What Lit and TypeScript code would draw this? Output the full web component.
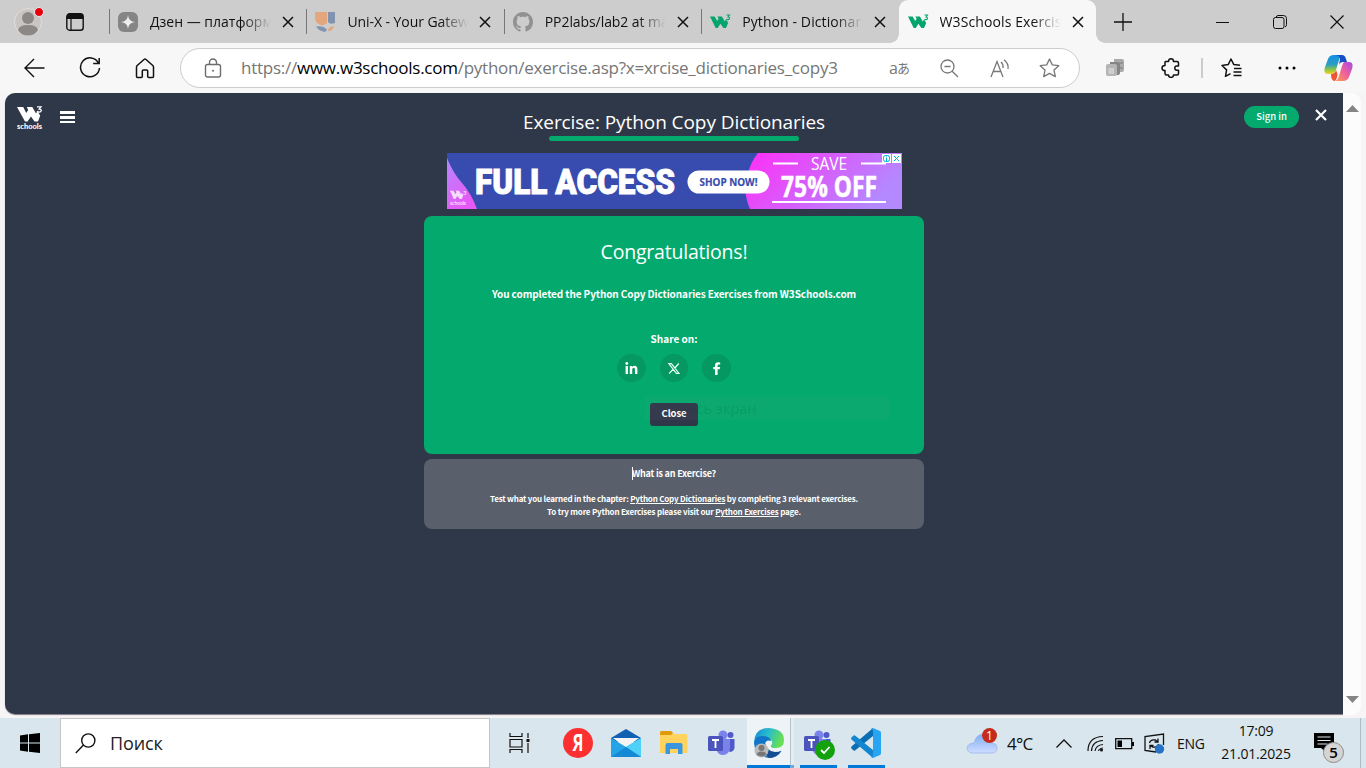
import { LitElement, html, css, svg } from "lit";
import { customElement } from "lit/decorators.js";

const w3Path = svg`<path d="M0 2h9l5 9 3-5-2-4h9l5 9 2-4 4 7-4 10h-5l-7-8-5 8h-4z"/>`;

const w3Favicon = html`<svg width="22" height="15" viewBox="0 0 22 15">
  <path d="M0 2.500h4.600L7.200 7l1.400-2.300-1.200-2.200h4.500l2.900 5 1.200-2.200 2.200 3.700-2.200 5h-2.600l-3-4.200L7.800 14H5.700z" fill="#04a56c"/>
  <path d="M16.500 1h3L18 2.900q1.700.1 1.600 1.500-.3 1.500-2 1.200-.8-.1-1.100-.6" fill="none" stroke="#04a56c" stroke-width="1.100"/>
</svg>`;

const closeIcon = html`<svg width="12" height="12" viewBox="0 0 12 12"><path d="M1 1l10 10M11 1L1 11" stroke="#111" stroke-width="1.500"/></svg>`;

const zenIcon = html`<svg width="20" height="20" viewBox="0 0 20 20"><rect width="20" height="20" rx="6" fill="#858585"/><path d="M10 3q.5 6.500 7 7-6.500.5-7 7-.5-6.500-7-7 6.500-.5 7-7z" fill="#eee"/></svg>`;

const uniIcon = html`<svg width="20" height="20" viewBox="0 0 20 20"><path d="M0 0h12v11L8 13.500Q0 12 0 6z" fill="#e3a67d"/><path d="M13 0h7v11q-5 2-7-1z" fill="#8293af"/><path d="M1 14.500q8-1 11 3.500l-2 2Q4 19 1 14.500z" fill="#8293af"/><path d="M13 18q1-3.500 6-4-1 4-5 5.500z" fill="#e3a67d"/></svg>`;

const githubIcon = html`<svg width="20" height="20" viewBox="0 0 16 16"><path fill="#919191" d="M8 0C3.580 0 0 3.580 0 8c0 3.540 2.290 6.530 5.470 7.590.4.070.55-.17.55-.38 0-.19-.01-.82-.01-1.490-2.010.37-2.530-.49-2.690-.94-.09-.23-.48-.94-.82-1.130-.28-.15-.68-.52-.01-.53.63-.01 1.080.58 1.230.82.72 1.210 1.870.87 2.330.66.070-.52.28-.87.51-1.070-1.780-.2-3.640-.89-3.640-3.950 0-.87.31-1.590.82-2.150-.08-.2-.36-1.020.08-2.120 0 0 .67-.21 2.200.82.64-.18 1.320-.27 2-.27s1.360.09 2 .27c1.530-1.040 2.200-.82 2.200-.82.44 1.100.16 1.920.08 2.120.51.56.82 1.270.82 2.150 0 3.070-1.870 3.750-3.650 3.950.29.25.54.73.54 1.480 0 1.070-.01 1.930-.01 2.200 0 .21.15.46.55.38A8.010 8.010 0 0 0 16 8c0-4.420-3.580-8-8-8z"/></svg>`;

@customElement("browser-tabs")
class BrowserTabs extends LitElement {
  static styles = css`
    :host { display: flex; height: 43px; background: #cdcdcd; font: 14px "Open Sans", sans-serif; color: #111; }
    .profile { width: 109px; display: flex; align-items: center; padding-left: 14px; box-sizing: border-box; }
    .profile svg + svg { margin-left: 22px; }
    .tab { width: 197.400px; height: 43px; box-sizing: border-box; display: flex; align-items: center; padding-left: 9px; position: relative; }
    .tab::before { content: ""; position: absolute; left: 0; top: 9px; height: 25px; width: 1px; background: #777; }
    .tab.active::before { display: none; }
    .icon { width: 22px; height: 20px; display: flex; align-items: center; }
    .label { margin-left: 10px; width: 122px; height: 22px; line-height: 21px; overflow: hidden; white-space: nowrap;
      -webkit-mask-image: linear-gradient(90deg, #000 76%, transparent 99%); mask-image: linear-gradient(90deg, #000 76%, transparent 99%); }
    .close { margin-left: 10px; height: 12px; display: flex; }
    .active { background: #f7f7f7; border-radius: 9px 9px 0 0; }
    .active::after { content: ""; position: absolute; right: -9px; bottom: 0; width: 9px; height: 9px; background: radial-gradient(circle at 100% 0, transparent 8.500px, #f7f7f7 9px); }
    .active .icon::before { content: ""; position: absolute; left: -9px; bottom: 0; width: 9px; height: 9px; background: radial-gradient(circle at 0 0, transparent 8.500px, #f7f7f7 9px); }
    .plus { margin-left: 18px; align-self: center; height: 18px; }
    .controls { margin-left: auto; display: flex; align-items: center; gap: 43px; padding-right: 22px; }
    .controls svg { display: block; }
    .l0 { letter-spacing: 0; } .l1 { letter-spacing: -.06px; } .l2 { letter-spacing: -.08px; } .l3 { letter-spacing: .1px; }
  `;
  render() {
    const tabs = [
      [zenIcon, "Дзен — платформа", "l0"],
      [uniIcon, "Uni-X - Your Gateway", "l1"],
      [githubIcon, "PP2labs/lab2 at main", "l2"],
      [w3Favicon, "Python - Dictionaries", "l3"],
      [w3Favicon, "W3Schools Exercises", "l3"],
    ];
    return html`
      <div class="profile">
        <svg width="30" height="30" viewBox="0 0 30 30"><circle cx="14" cy="15" r="13.500" fill="#c8c5c2" stroke="#e2dfdc"/><circle cx="14" cy="11" r="6" fill="#8b8885"/><path d="M4 23q1-5 10-5t10 5q-3 5.500-10 5.500T4 23z" fill="#8b8885"/><circle cx="25" cy="5" r="4.500" fill="#e6000b" stroke="#eee" stroke-width="1"/></svg>
        <svg width="18" height="18" viewBox="0 0 18 18"><rect x=".8" y=".8" width="16.400" height="16.400" rx="2.800" fill="none" stroke="#111" stroke-width="1.400"/><path d="M.8 6V3.500Q1 1 3.500.8h11q2.500.2 2.700 2.700V6z" fill="#111"/><path d="M5 5v12" stroke="#111" stroke-width="1.200"/></svg>
      </div>
      ${tabs.map(([icon, label, cls], i) => html`<div class="tab ${i === 4 ? "active" : ""}"><span class="icon">${icon}</span><span class="label ${cls}">${label}</span><span class="close">${closeIcon}</span></div>`)}
      <svg class="plus" width="18" height="18"><path d="M9 0v18M0 9h18" stroke="#111" stroke-width="1.300"/></svg>
      <div class="controls">
        <svg width="14" height="14"><path d="M0 7.500h13" stroke="#111"/></svg>
        <svg width="14" height="14" viewBox="0 0 14 14" fill="none" stroke="#111"><rect x=".5" y="2.500" width="10.500" height="11" rx="2"/><path d="M3 2.500Q3.500.5 5 .5h5.500q3 0 3 3v6q0 2-1.500 2.500"/></svg>
        <svg width="14" height="14"><path d="M.5.500l13 13M13.500.500l-13 13" stroke="#111" stroke-width="1.200"/></svg>
      </div>`;
  }
}

@customElement("browser-toolbar")
class BrowserToolbar extends LitElement {
  static styles = css`
    :host { display: flex; height: 50px; background: #f7f7f7; align-items: center; font-family: "Open Sans", sans-serif; }
    svg { display: block; flex: none; }
    .nav { width: 180px; box-sizing: border-box; display: flex; align-items: center; padding-left: 24px; gap: 34px; }
    .address { width: 900px; height: 40px; box-sizing: border-box; border: 1px solid #ccc; border-radius: 20px; background: #fff; display: flex; align-items: center; padding-left: 23px; }
    .url { margin-left: 19px; width: 648px; font-size: 17px; line-height: 24px; color: #767676; letter-spacing: -.25px; white-space: nowrap; }
    .url b { font-weight: 400; color: #000; }
    .translate { width: 24px; color: #777; font: 16px/20px "Open Sans", "Noto Sans CJK JP", sans-serif; letter-spacing: -1px; white-space: nowrap; display: flex; align-items: center; }
    .translate small { font-size: 13px; }
    .address .zoom { margin-left: 27px; } .address .read { margin-left: 31px; } .address .star { margin-left: 29px; }
    .ext { margin-left: 26px; } .puzzle { margin-left: 37px; }
    .divider { width: 1.500px; height: 20px; background: #ccc; margin-left: 20px; }
    .fav { margin-left: 18px; } .more { margin-left: 36px; } .copilot { margin-left: 28px; }
  `;
  render() {
    return html`
      <div class="nav">
        <svg width="21" height="20" viewBox="0 0 21 20" fill="none" stroke="#111" stroke-width="1.400"><path d="M20.500 10H1.500M10 1L1 10l9 9"/></svg>
        <svg width="22" height="22" viewBox="0 0 22 22" fill="none" stroke="#111" stroke-width="1.500"><path d="M19.500 6A9.500 9.500 0 1 0 20.500 11M20.200 1v5.500h-6"/></svg>
        <svg width="20" height="21" viewBox="0 0 20 21" fill="none" stroke="#111" stroke-width="1.500" stroke-linejoin="round"><path d="M1.500 9Q1.500 8.200 2.200 7.500L9 1.500q1-.8 2 0l6.800 6q.7.700.7 1.500v9.500q0 1-1 1h-3.800q-1 0-1-1V13q0-1-1-1H8.300q-1 0-1 1v5.500q0 1-1 1H2.500q-1 0-1-1z"/></svg>
      </div>
      <div class="address">
        <svg width="18" height="20" viewBox="0 0 18 20" fill="none" stroke="#6d6d6d" stroke-width="1.400"><rect x="1.500" y="6.500" width="15" height="12.500" rx="2"/><path d="M5.500 6.500V4.500a3.500 3.500 0 0 1 7 0v2"/><circle cx="9" cy="12.700" r="1" fill="#6d6d6d" stroke="none"/></svg>
        <span class="url">https://<b>www.w3schools.com</b>/python/exercise.asp?x=xrcise_dictionaries_copy3</span>
        <span class="translate">a<small>あ</small></span>
        <svg class="zoom" width="19" height="19" viewBox="0 0 19 19" fill="none" stroke="#777" stroke-width="1.300"><circle cx="7.500" cy="7.500" r="6.500"/><path d="M12.200 12.200L18 18M4.500 7.500h6"/></svg>
        <svg class="read" width="20" height="19" viewBox="0 0 20 19" fill="none" stroke="#777" stroke-width="1.300"><path d="M1 18L7 2.500 13 18M3 12.500h8M11 3q2.500 2.200 2 6M14 .7q5 4 4 9.300"/></svg>
        <svg class="star" width="21" height="20" viewBox="0 0 21 20" fill="none" stroke="#777" stroke-width="1.300" stroke-linejoin="round"><path d="M10.500 1l2.800 5.900 6.500.8-4.800 4.400 1.300 6.500-5.800-3.200-5.800 3.200L6 12.100 1.200 7.700l6.500-.8z"/></svg>
      </div>
      <svg class="ext" width="18" height="20" viewBox="0 0 18 20"><path d="M8 1h8q2 0 2 2v9q0 2-2 2H8z" fill="#aaa"/><path d="M4 4h8q2 0 2 2v9q0 2-2 2H4z" fill="#858585"/><path d="M14.500 4h2v2h-2zM14.500 9h2v2h-2z" fill="#888"/><rect y="6" width="11" height="12" rx="2" fill="#b5b5b5"/><rect x="2.500" y="10" width="5.500" height="6" fill="#cecece"/></svg>
      <svg class="puzzle" width="20" height="20" viewBox="0 0 20 20" fill="none" stroke="#111" stroke-width="1.500" stroke-linejoin="round"><path d="M4.500 3.500h3q0-2.700 2.500-2.700t2.500 2.700H16q1.500 0 1.500 1.500v3h-1.700q-2 0-2 2.100t2 2.100h1.700V15.500q0 1.500-1.500 1.500h-3.500q0 2.400-2.500 2.400T7.500 17H5.500q-1.500 0-1.500-1.500V12.600Q1 12.600 1 10t3-2.600V4z"/></svg>
      <span class="divider"></span>
      <svg class="fav" width="21" height="20" viewBox="0 0 21 20" fill="none" stroke="#111" stroke-width="1.500" stroke-linejoin="round"><path d="M19 7.300l-6.200-.7L10 1 7.200 6.600 1 7.500l4.600 4.400L4.500 18.300l5-2.700M13 10.500h7.500M12.500 14h8M12.500 17.500h8"/></svg>
      <svg class="more" width="18" height="4"><circle cx="2" cy="2" r="1.500"/><circle cx="9" cy="2" r="1.500"/><circle cx="16" cy="2" r="1.500"/></svg>
      <svg class="copilot" width="29" height="28" viewBox="0 0 29 28"><defs>
        <linearGradient id="a" x1="0" y1="0" x2="0" y2="1"><stop stop-color="#168fe5"/><stop offset=".5" stop-color="#2b9fc4"/><stop offset=".8" stop-color="#9cc73a"/><stop offset="1" stop-color="#f4d52a"/></linearGradient>
        <linearGradient id="b" x1="1" y1="0" x2="0" y2="1"><stop stop-color="#a34be8"/><stop offset=".5" stop-color="#f0609a"/><stop offset="1" stop-color="#fb9f50"/></linearGradient></defs>
        <path d="M10 1h9q-3 1-4 5l-3 10q-1.500 4-5 4H4q-5 0-3-7L4 5q1.500-4 6-4z" fill="url(#a)"/>
        <path d="M12 1h6q3 0 4 4l1 3h-4q-3 0-4 3l1-6q0-3-4-4z" fill="#1650c4"/>
        <path d="M20 8h5q5 0 3 7l-3 8q-1.500 4-6 4h-8q3-1 4-5l3-10q1-3 2-4z" fill="url(#b)"/>
        <path d="M7 20q4 0 5-4l1.500 4q-.5 6-3 7Q7 27 7 20z" fill="#ee5537"/></svg>`;
  }
}

@customElement("ad-banner")
class AdBanner extends LitElement {
  static styles = css`
    :host { display: block; width: 455px; height: 56px; }
    svg { display: block; }
    .strong { font-family: "Roboto", sans-serif; font-weight: 900; }
    .open { font-family: "Open Sans", sans-serif; }
    .bold { font-weight: 700; }
    .geo { font-family: "Lato", sans-serif; font-weight: 700; }
  `;
  render() {
    return html`<svg width="455" height="56" viewBox="0 0 455 56">
      <defs>
        <linearGradient id="p" x1="0" y1="0" x2="1" y2=".35"><stop stop-color="#ff2df7"/><stop offset="1" stop-color="#b488ff"/></linearGradient>
        <linearGradient id="q" x1="0" y1="0" x2=".5" y2="1"><stop stop-color="#b488ff"/><stop offset="1" stop-color="#e758f4"/></linearGradient>
      </defs>
      <rect width="455" height="56" fill="#384caf"/>
      <path d="M0 5q6 15 15 25t15 26H0z" fill="url(#q)"/>
      <path d="M311 0q-8 10-10 21-6 17 2 35h152V0z" fill="url(#p)"/>
      <g transform="translate(3 37) scale(.38)" fill="#f6dcff">${w3Path}</g>
      <text x="16" y="42" font-size="6" class="geo" fill="#f6dcff">3</text>
      <text x="3" y="52" font-size="5" class="geo" fill="#f6dcff" textLength="16">schools</text>
      <text x="28" y="40.500" font-size="34.500" class="strong" fill="#fff" stroke="#fff" stroke-width=".9" textLength="200" lengthAdjust="spacingAndGlyphs">FULL ACCESS</text>
      <rect x="240.500" y="17.500" width="82" height="23" rx="11.500" fill="#fff"/>
      <text x="252.500" y="33" font-size="10.500" class="open bold" fill="#384caf" stroke="#384caf" stroke-width=".2" textLength="58" lengthAdjust="spacingAndGlyphs">SHOP NOW!</text>
      <path d="M326 10.500h25M414 10.500h25M325 49h114" stroke="#fff" stroke-width="2"/>
      <text x="364" y="17" font-size="18" class="open" fill="#fff" textLength="36" lengthAdjust="spacingAndGlyphs">SAVE</text>
      <text x="334" y="43.500" font-size="28" class="open bold" fill="#fff" stroke="#fff" stroke-width=".5" textLength="96" lengthAdjust="spacingAndGlyphs">75% OFF</text>
      <rect x="435" y="1" width="9" height="9" fill="#fff"/><rect x="445" y="1" width="9" height="9" fill="#fff"/>
      <g fill="none" stroke="#00aecd"><rect x="436.500" y="2.500" width="6" height="6" rx="2"/><path d="M439.500 3.500v1M439.500 5v3M447 3l5 5M452 3l-5 5"/></g>
    </svg>`;
  }
}

@customElement("exercise-page")
class ExercisePage extends LitElement {
  static styles = css`
    :host { display: flex; height: 622px; padding-left: 5px; background: #f7f4f6; }
    svg { display: block; }
    .page { width: 1338px; height: 621px; box-sizing: border-box; background: #2f3848; border-radius: 10px 0 0 10px; color: #fff; display: grid; grid-template-columns: 300px 1fr 300px; box-shadow: 0 1px 1px #7d7682; }
    .brand { display: flex; gap: 15px; padding: 11px 0 0 12px; align-items: flex-start; }
    .menu { margin-top: 7px; display: grid; gap: 2px; width: 15px; }
    .menu i { height: 2.800px; background: #fff; }
    .logo text { font: 900 8px "Lato", sans-serif; }
    .center { display: flex; flex-direction: column; align-items: center; }
    h1 { margin: 15px 0 0; font: 400 19px/28px "Open Sans", sans-serif; letter-spacing: -.07px; white-space: nowrap; }
    .bar { width: 250px; height: 5px; border-radius: 3px; background: #04aa6d; }
    ad-banner { margin-top: 12px; }
    .card { margin-top: 7px; width: 500px; height: 238px; border-radius: 8px; background: #04aa6d; display: flex; flex-direction: column; align-items: center; position: relative; }
    h2 { margin: 22px 0 0; font: 400 19.500px/28px "Open Sans", sans-serif; letter-spacing: -.2px; }
    .src { font-family: "Noto Sans CJK SC", sans-serif; font-weight: 700; white-space: nowrap; }
    .done { margin: 20px 0 0; font-size: 10px; line-height: 16px; letter-spacing: -.1px; }
    .share { margin: 29px 0 0; font-size: 10px; line-height: 16px; }
    .socials { display: flex; gap: 14px; margin-top: 7px; }
    .socials span { width: 28.500px; height: 28px; border-radius: 50%; background: #059862; display: grid; place-items: center; }
    .close { margin-top: 21px; width: 48px; height: 23px; border: 0; border-radius: 3px; background: #2f3848; color: #fff; font-size: 9.500px; letter-spacing: -.1px; line-height: 20px; text-align: center; }
    .toast { position: absolute; left: 221px; top: 180px; width: 244px; height: 24px; box-sizing: border-box; padding-left: 34px; background: rgba(200, 150, 180, .04); color: rgba(0, 60, 40, .14); font: 14.500px/26px "Open Sans", sans-serif; border-radius: 2px; }
    .info { margin-top: 5px; width: 500px; height: 70px; border-radius: 8px; background: #595f6b; display: flex; flex-direction: column; align-items: center; }
    .info h3 { margin: 8px 0 0; font-size: 9px; line-height: 14px; position: relative; letter-spacing: -.2px; }
    .info h3::before { content: ""; position: absolute; left: 0; top: 0; width: 1px; height: 13px; background: #fff; }
    .info p { margin: 11px 0 0; font-size: 8px; line-height: 13px; text-align: center; letter-spacing: -.19px; }
    .info u { text-underline-offset: 1px; }
    .actions { display: flex; justify-content: flex-end; align-items: flex-start; padding: 13px 16.500px 0 0; gap: 15.500px; }
    .signin { width: 55px; height: 22px; border-radius: 11px; background: #04aa6d; text-align: center; font-size: 9.500px; line-height: 20px; font-weight: 500; }
    .actions svg { margin-top: 3px; }
    .scroll { width: 18px; box-sizing: border-box; background: #fcfcfc; border-radius: 0 9px 9px 0; display: flex; flex-direction: column; justify-content: space-between; align-items: center; padding: 12px 0; }
  `;
  render() {
    return html`
      <div class="page">
        <div class="brand">
          <svg class="logo" width="28" height="27" viewBox="0 0 28 27" fill="#fff"><path d="M0 3h6.200l3 6 2-3-1.400-3h5.500l3.700 6.500L20.500 7l2.700 4.700L21 17.500h-3.500L14 12.500l-3.500 5H8z"/><path d="M20 2.800h4L22.200 5q2.200 0 2 1.800-.5 1.700-2.500 1.200-1.200-.2-1.700-1" fill="none" stroke="#fff" stroke-width="1.300"/><text x="0" y="24.500" textLength="25" lengthAdjust="spacingAndGlyphs">schools</text></svg>
          <div class="menu"><i></i><i></i><i></i></div>
        </div>
        <div class="center">
          <h1>Exercise: Python Copy Dictionaries</h1>
          <div class="bar"></div>
          <ad-banner></ad-banner>
          <div class="card">
            <h2>Congratulations!</h2>
            <p class="done src">You completed the Python Copy Dictionaries Exercises from W3Schools.com</p>
            <p class="share src">Share on:</p>
            <div class="socials">
              <span><svg width="13" height="12" viewBox="0 0 13 12" fill="#fff"><circle cx="1.800" cy="1.500" r="1.400"/><path d="M.6 4h2.400v8H.6zM4.800 4H7v1.100Q7.800 3.800 9.400 3.800q3 0 3 3.500V12H10V7.800q0-2-1.300-2-1.500 0-1.500 2V12H4.800z"/></svg></span>
              <span><svg width="12" height="11" viewBox="0 0 12 11" fill="none" stroke="#e6fff5" stroke-width="1.200"><path d="M.8.600h2.600l7.600 9.800H8.400zM10.800.500L6.800 5M5.200 6.200L1.200 10.500"/></svg></span>
              <span><svg width="8" height="13" viewBox="0 0 8 13" fill="#fff"><path d="M2 13V7.300H.3V5H2V3.400Q2 .2 5.200.2l2 .2v2H6q-1.400 0-1.400 1.300V5h2.500l-.4 2.300H4.600V13z"/></svg></span>
            </div>
            <div class="close src">Close</div>
            <div class="toast">Весь экран</div>
          </div>
          <div class="info">
            <h3 class="src">What is an Exercise?</h3>
            <p class="src">Test what you learned in the chapter: <u>Python Copy Dictionaries</u> by completing 3 relevant exercises.<br>To try more Python Exercises please visit our <u>Python Exercises</u> page.</p>
          </div>
        </div>
        <div class="actions">
          <span class="signin src">Sign in</span>
          <svg width="12" height="12"><path d="M1 1l10 10M11 1L1 11" stroke="#fff" stroke-width="2.200"/></svg>
        </div>
      </div>
      <div class="scroll">
        <svg width="13" height="7"><path d="M0 7L6.500 0 13 7z" fill="#858585"/></svg>
        <svg width="13" height="7"><path d="M0 0h13L6.500 7z" fill="#858585"/></svg>
      </div>`;
  }
}

const teams = html`<svg width="30" height="28" viewBox="0 0 30 28"><circle cx="16" cy="6" r="4.500" fill="#7b83eb"/><circle cx="23.500" cy="6" r="3" fill="#5059c9"/><path d="M20 10h7.500v9q-1 4-5 4z" fill="#5059c9"/><path d="M10 10h13v9q-1 7-7 7-5 0-6.500-5z" fill="#7b83eb"/><rect x="1" y="7" width="15" height="15" rx="1.500" fill="#4b53bc"/><path d="M5 11h7M8.500 11v8" stroke="#fff" stroke-width="1.800"/></svg>`;

@customElement("task-bar")
class TaskBar extends LitElement {
  static styles = css`
    :host { display: flex; height: 50px; background: #d9e6ed; font-family: "Open Sans", sans-serif; color: #111; }
    svg { display: block; flex: none; }
    .start { width: 60px; display: grid; place-items: center; }
    .search { width: 430px; box-sizing: border-box; border: 1px solid #c6c6c6; background: #fff; display: flex; align-items: center; padding-left: 14px; font-size: 18px; letter-spacing: -.1px; color: #222; gap: 14px; }
    .search span { line-height: 24px; }
    .view { width: 64px; box-sizing: border-box; display: flex; align-items: center; padding-left: 19px; }
    .app { width: 48px; display: grid; place-items: center; position: relative; }
    .app.edge { width: 47px; margin-left: 1px; background: linear-gradient(90deg, #edf3f7 42.500px, #b4c2ca 42.500px 43.500px, #e4edf2 43.500px); }
    .edge svg { margin-right: 4px; }
    .run::after { content: ""; position: absolute; bottom: 0; left: 5.500px; right: 5.500px; height: 3px; background: #0078d7; }
    .edge.run::after { left: 0; right: 0; background: linear-gradient(90deg, #0078d7 43px, #6faadb 43px); }
    .tick { position: absolute; left: 21px; top: 22px; }
    .tray { margin-left: auto; width: 400px; display: flex; align-items: center; }
    .temp { margin-left: 9px; width: 30px; font-size: 17px; letter-spacing: -.7px; white-space: nowrap; }
    .up { margin-left: 19px; } .wifi { margin-left: 15px; } .bat { margin-left: 11px; margin-top: 1px; } .sync { margin-left: 10px; }
    .lang { margin-left: 12px; width: 30px; font-size: 14px; letter-spacing: -.3px; white-space: nowrap; }
    .clock { margin-left: 11px; width: 76px; text-align: center; font-size: 14px; line-height: 23px; letter-spacing: -.2px; white-space: nowrap; padding-bottom: 2px; }
    .note { margin-left: 20px; align-self: flex-start; margin-top: 13px; }
    .note text { font: 600 15px "Open Sans", sans-serif; }
    .weather text { font: 12px "Open Sans", sans-serif; }
    .end { width: 1px; height: 50px; background: #aebbc4; margin-left: auto; margin-right: 5px; }
    .ya text { font: 700 23px "Open Sans", sans-serif; }
  `;
  render() {
    return html`
      <div class="start"><svg width="20" height="20" viewBox="0 0 20 20"><path d="M0 2.500l8-1.200v8.200H0zM9 1.200L20 0v9.500H9zM0 10.500h8v8.200l-8-1.200zM9 10.500h11V20L9 18.800z"/></svg></div>
      <div class="search"><svg width="21" height="21" viewBox="0 0 21 21" fill="none" stroke="#111" stroke-width="1.400"><circle cx="13.300" cy="7.500" r="6.600"/><path d="M8.500 12L.8 20"/></svg><span>Поиск</span></div>
      <div class="view"><svg width="21" height="20" viewBox="0 0 21 20" fill="none" stroke="#111" stroke-width="1.200"><path d="M1 0v3.500h12V0M1 20v-3.500h12V20M1 6.500h12v7.500H1zM19 0v5M19 10v10"/><rect x="17.500" y="6" width="3" height="3" fill="#111" stroke="none"/></svg></div>
      <div class="app"><svg class="ya" width="30" height="30"><circle cx="15" cy="15" r="15" fill="#fc3030"/><text x="15" y="23" text-anchor="middle" fill="#fff" textLength="11" lengthAdjust="spacingAndGlyphs">Я</text></svg></div>
      <div class="app"><svg width="30" height="28" viewBox="0 0 30 28"><path d="M0 9L15 0l15 9v4H0z" fill="#1160b2"/><path d="M2 9h26L15 19z" fill="#f4f4f4"/><path d="M0 9l15 9 15-9v19H0z" fill="#24a3e6"/><path d="M30 9v19L15 18z" fill="#4fd0f8"/><path d="M0 28l15-10 15 10z" fill="#1689d4"/></svg></div>
      <div class="app"><svg width="28" height="24" viewBox="0 0 28 24"><path d="M0 1.500Q0 0 1.500 0H11l3 3h12q1.500 0 1.500 2v17H0z" fill="#ffd35d"/><path d="M0 4V1.500Q0 0 1.500 0H11l2 2-2 2z" fill="#e19b0a"/><path d="M5.500 23V14q0-2 2-2h13q2 0 2 2v9H18v-5h-8v5z" fill="#3a97df"/></svg></div>
      <div class="app">${teams}</div>
      <div class="app edge run"><svg width="30" height="30" viewBox="0 0 30 30"><defs><linearGradient id="e" x1="0" y1="0" x2="1" y2=".3"><stop stop-color="#1688d8"/><stop offset=".5" stop-color="#28bccb"/><stop offset="1" stop-color="#66df56"/></linearGradient></defs>
        <path d="M0 15Q0 0 15 0q15 1 15 12 0 8-8 8-6 0-5-2.500 2.500-2.500 0-5.500Q10 6 4 12q-3 3-4 3z" fill="url(#e)"/>
        <path d="M0 15Q1 8 8 8q8 0 9 5-5-2-6 3 0 9 10 9 4 0 6.500-2Q23 30 15 30 1 29 0 15z" fill="#1276c8"/><path d="M11 15q1 8 10 9 4 0 6.500-1.500Q23 30 15 30q-7-6-4-15z" fill="#164c91"/>
        <circle cx="7.500" cy="22.500" r="7" fill="#bbb"/><circle cx="7.500" cy="20" r="3" fill="#777"/><path d="M2.500 26.500q1-3 5-3t5 3q-5 4-10 0z" fill="#777"/></svg></div>
      <div class="app run">${teams}<svg class="tick" width="20" height="20"><circle cx="10" cy="10" r="10" fill="#13a10e"/><path d="M6 10l3 3 5.500-6" fill="none" stroke="#fff" stroke-width="1.800"/></svg></div>
      <div class="app run"><svg width="30" height="30" viewBox="0 0 30 30"><path d="M22 0v8L4 22.500Q3 23 2 22L.5 20.500q-.8-1 0-2z" fill="#0a6eb5"/><path d="M22 30v-8L4 7.500Q3 7 2 8L.5 9.500q-.8 1 0 2z" fill="#1485cf"/><path d="M22 0l7 3q1 .5 1 2v20q0 1.500-1 2l-7 3q-1 0-2-1 2 0 2-2V3q0-2-2-2 1-1 2-1z" fill="#28a5f2"/></svg></div>
      <div class="tray">
        <svg class="weather" width="32" height="30" viewBox="0 0 32 30"><defs><linearGradient id="c" x1="0" y1="0" x2="0" y2="1"><stop stop-color="#7daff5"/><stop offset="1" stop-color="#cfdcff"/></linearGradient></defs><path d="M6 25q-5-1-5-5 1-5 7-5Q10 6 18 6q6 1 7 9 6 0 6 5t-5 5z" fill="url(#c)" stroke="#8facec" stroke-width=".6"/><circle cx="23.500" cy="7.500" r="7.500" fill="#c42b1c"/><text x="23.500" y="11.800" text-anchor="middle" fill="#fff">1</text></svg>
        <span class="temp">4°C</span>
        <svg class="up" width="16" height="9" fill="none" stroke="#111" stroke-width="1.300"><path d="M.5 8.500L8 1l7.500 7.500"/></svg>
        <svg class="wifi" width="17" height="17" viewBox="0 0 17 17" fill="none" stroke="#111" stroke-width="1.200"><path d="M1 16Q1 2 16 1.500M4.500 16Q5 6 16 5.500M8 16q1-6 8-6.500M11.500 16q.5-2.500 4.500-3"/><circle cx="14.500" cy="15" r="1.500" fill="#111" stroke="none"/></svg>
        <svg class="bat" width="19" height="12"><path d="M.7.700h16v10H.7z" fill="none" stroke="#111" stroke-width="1.300"/><path d="M2.500 2.500h4.500v6.500H2.500zM17 4h2v4h-2z"/></svg>
        <svg class="sync" width="21" height="21" viewBox="0 0 21 21" fill="none" stroke="#111" stroke-width="1.300"><path d="M19.500 12V1L1 3.500v14l11 1.500M5.500 10q1-4 6-3l2.500 2M14 5.500V9h-3.500M14.500 11q-1 4-6 3L6 12.500M6 16v-3.500h3.500"/><circle cx="15.500" cy="16" r="4.700" fill="#2672c4" stroke="none"/></svg>
        <span class="lang">ENG</span>
        <div class="clock">17:09<br>21.01.2025</div>
        <svg class="note" width="31" height="33" viewBox="0 0 31 33"><path d="M0 2h20v15h-7v5l-6-5H0z"/><path d="M3.500 6h13M3.500 9.500h13M3.500 13h10" stroke="#d9e6ed" stroke-width="1.200"/><circle cx="19.500" cy="21.500" r="10" fill="#d4d4d4" stroke="#8b8b8b"/><text x="19.500" y="27" text-anchor="middle">5</text></svg>
        <span class="end"></span>
      </div>`;
  }
}

@customElement("app-root")
class AppRoot extends LitElement {
  static styles = css`
    :host { display: flex; flex-direction: column; width: 1366px; height: 768px; overflow: hidden; background: #f7f4f6; }
    task-bar { margin-top: 3px; }
  `;
  render() {
    return html`<browser-tabs></browser-tabs><browser-toolbar></browser-toolbar><exercise-page></exercise-page><task-bar></task-bar>`;
  }
}
